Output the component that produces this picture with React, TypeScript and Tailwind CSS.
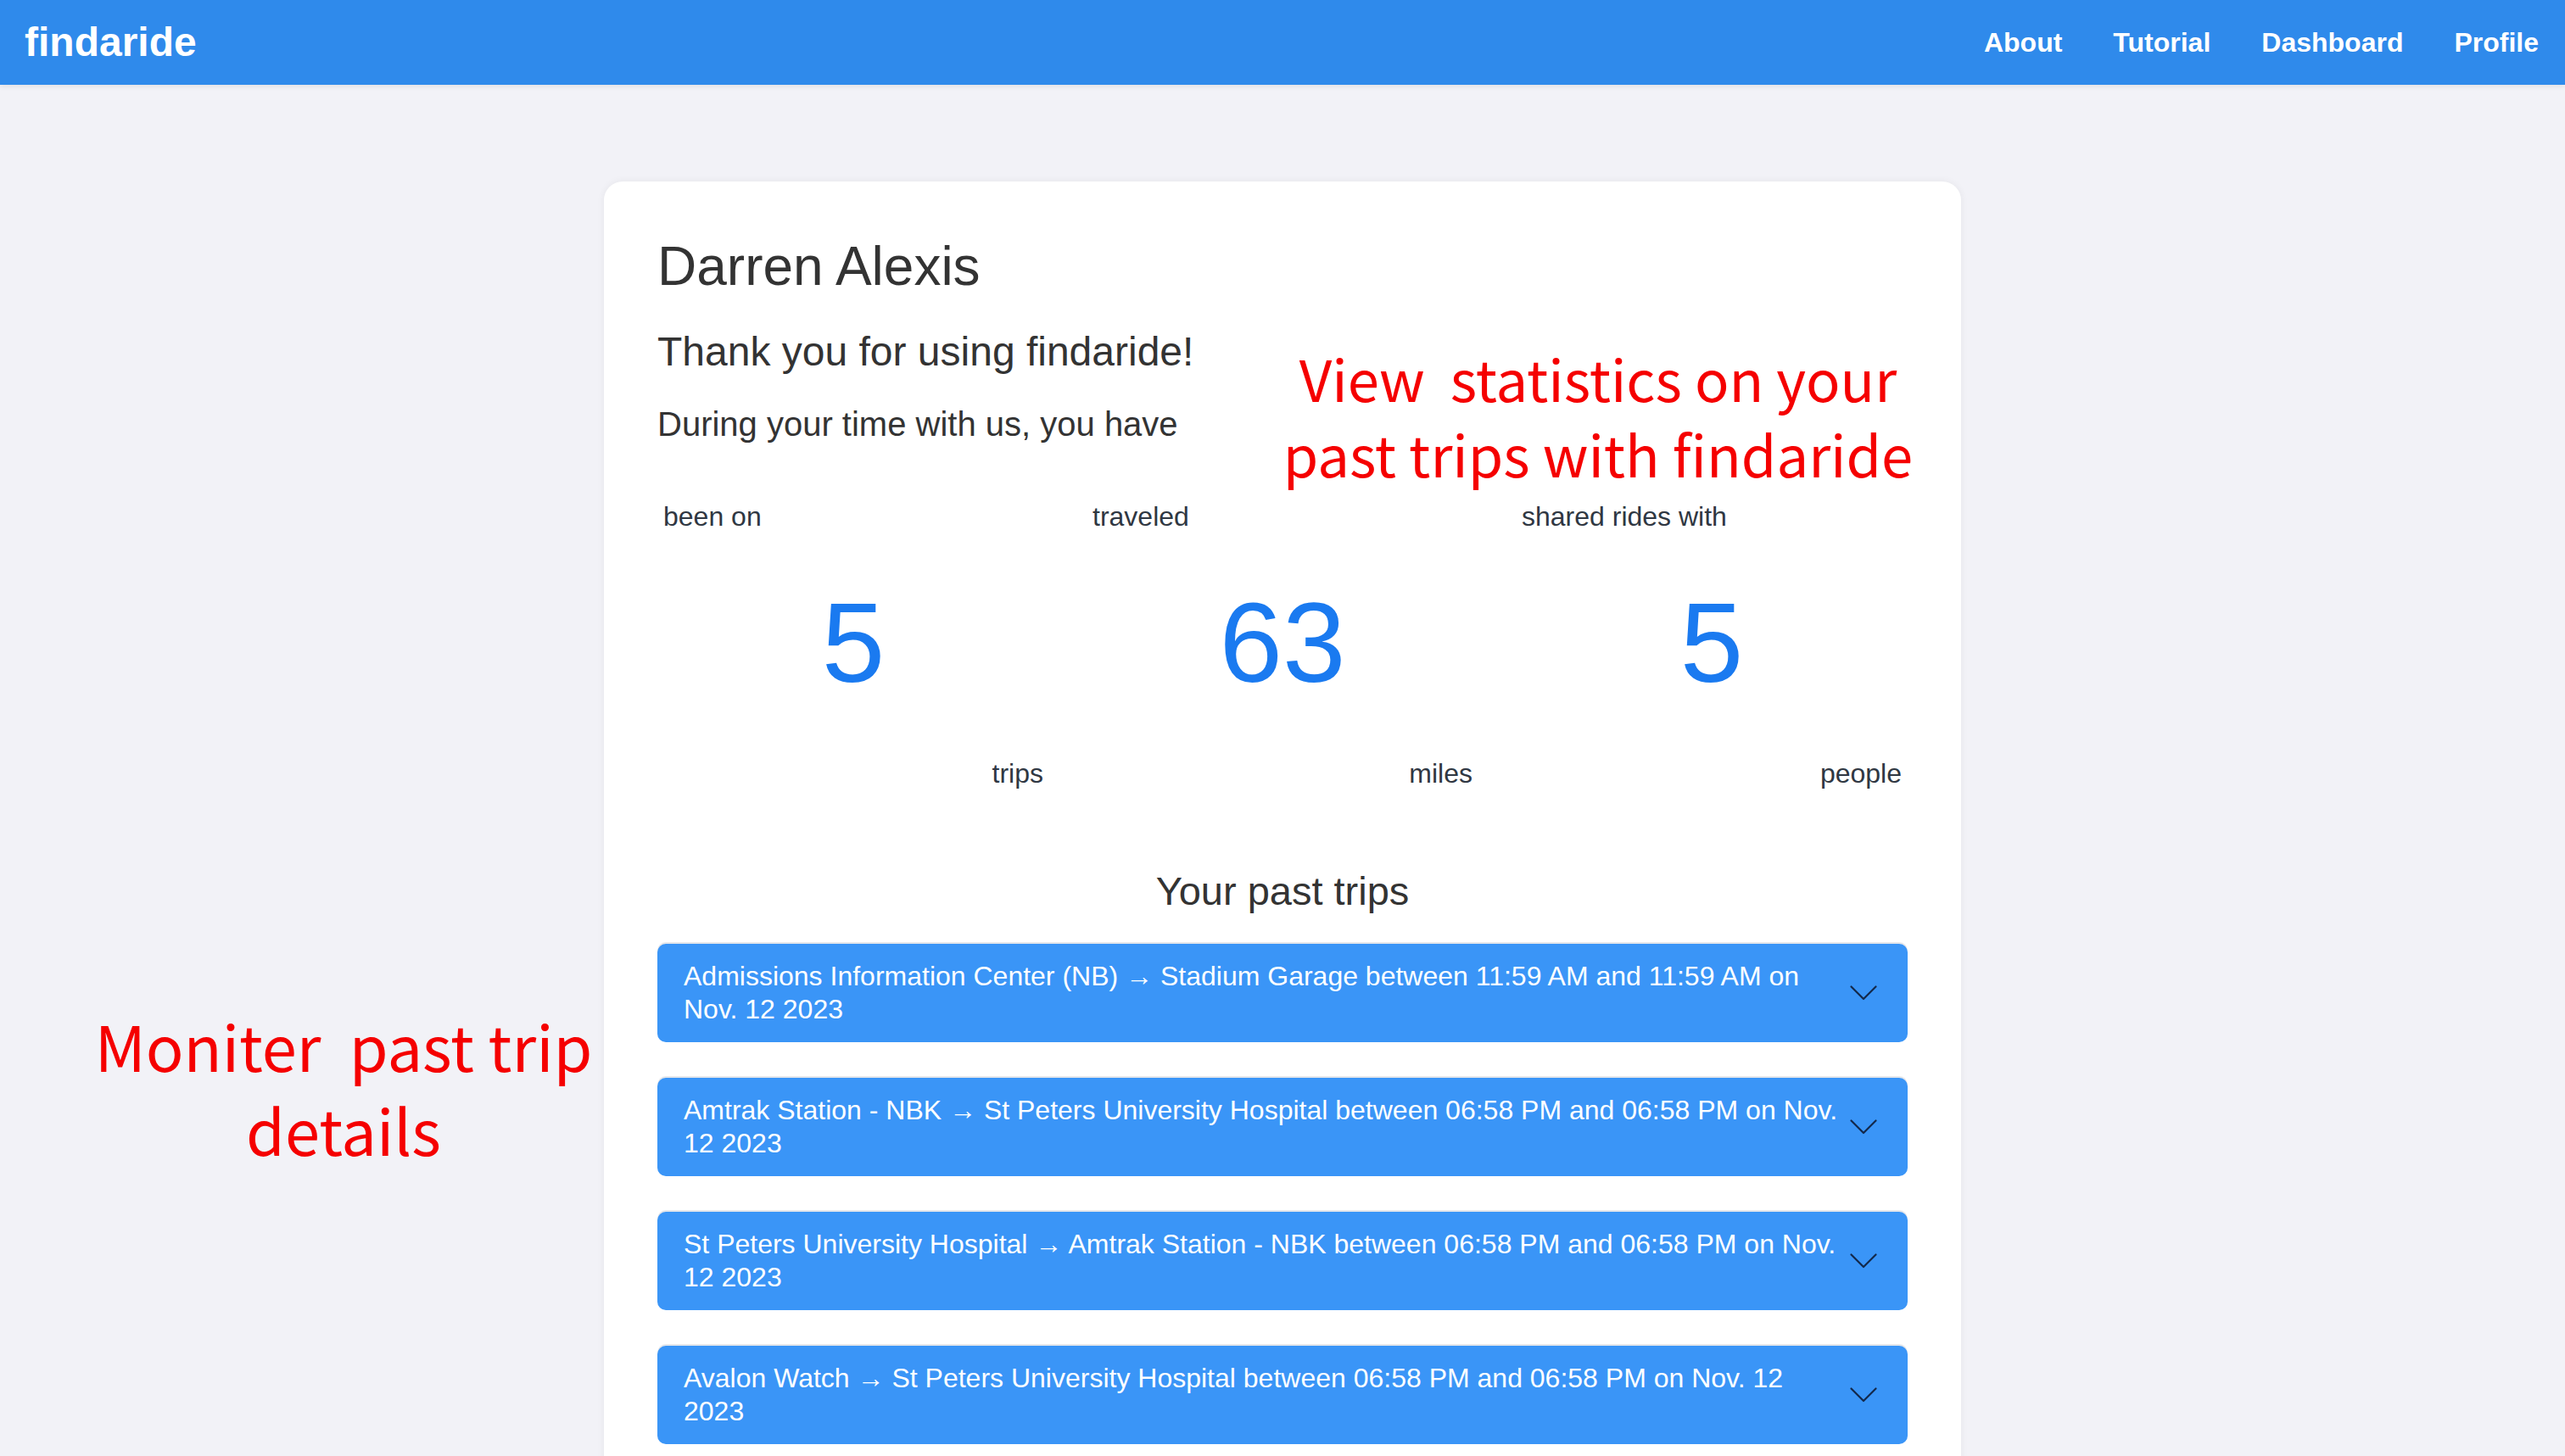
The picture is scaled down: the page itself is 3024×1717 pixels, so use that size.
import React from 'react';

const trips = [
  'Admissions Information Center (NB) → Stadium Garage between 11:59 AM and 11:59 AM on Nov. 12 2023',
  'Amtrak Station - NBK → St Peters University Hospital between 06:58 PM and 06:58 PM on Nov. 12 2023',
  'St Peters University Hospital → Amtrak Station - NBK between 06:58 PM and 06:58 PM on Nov. 12 2023',
  'Avalon Watch → St Peters University Hospital between 06:58 PM and 06:58 PM on Nov. 12 2023',
];

const stats = [
  { label: 'been on', value: '5', unit: 'trips' },
  { label: 'traveled', value: '63', unit: 'miles' },
  { label: 'shared rides with', value: '5', unit: 'people' },
];

function Chevron() {
  return (
    <svg width="32" height="18" viewBox="0 0 32 18" fill="none" className="shrink-0">
      <polyline points="1.5,1.5 16,16 30.5,1.5" stroke="#13294b" strokeWidth="2.2" strokeLinecap="round" strokeLinejoin="round" />
    </svg>
  );
}

function TripRow({ text }: { text: string }) {
  return (
    <button
      type="button"
      className="flex h-[116px] w-full items-center rounded-[10px] bg-[#3a95f7] pl-[31px] pr-[36px] text-left shadow-[0_-2px_0_#e5e7eb]"
    >
      <span className="w-[1376px] text-[32px] leading-[39px] text-white">{text}</span>
      <span className="ml-auto flex items-center">
        <Chevron />
      </span>
    </button>
  );
}

export default function App() {
  return (
    <div className="relative min-h-screen bg-[#f2f2f7] font-['Liberation_Sans',Arial,sans-serif] text-[#333]">
      <nav className="flex h-[100px] items-center justify-between bg-[#2f8aeb] pl-[29px] pr-[31px] shadow-[0_2px_6px_rgba(0,0,0,0.08)]">
        <span className="text-[48px] font-bold leading-none text-white">findaride</span>
        <div className="flex items-center gap-[60px] text-[32px] font-bold text-white">
          <a>About</a>
          <a>Tutorial</a>
          <a>Dashboard</a>
          <a>Profile</a>
        </div>
      </nav>

      <main className="mx-auto mt-[114px] w-[1600px] rounded-[22px] bg-white px-[63px] pb-[60px] pt-[64px] shadow-[0_0_10px_rgba(0,0,0,0.06)]">
        <h1 className="text-[64px] leading-[72px]">Darren Alexis</h1>
        <p className="mt-[37px] text-[48px] leading-[56px]">Thank you for using findaride!</p>
        <p className="mt-[33px] text-[40px] leading-[48px]">During your time with us, you have</p>

        <div className="mt-[65px] grid grid-cols-3 gap-[58px] px-[7px] text-[#2f3742]">
          {stats.map((s) => (
            <div key={s.label} className="flex flex-col">
              <span className="text-[32px] leading-[40px]">{s.label}</span>
              <span className="mt-[54px] text-center text-[134px] leading-[150px] text-[#1a7af0]">{s.value}</span>
              <span className="mt-[59px] text-right text-[32px] leading-[40px]">{s.unit}</span>
            </div>
          ))}
        </div>

        <h2 className="mt-[91px] text-center text-[47px] leading-[56px]">Your past trips</h2>

        <div className="mt-[34px] flex flex-col gap-[42px]">
          {trips.map((t) => (
            <TripRow key={t} text={t} />
          ))}
        </div>
      </main>

      {/* red annotations laid over the screenshot */}
      <div className="absolute left-[1480px] top-[400px] w-[808px] whitespace-pre text-center font-['Noto_Sans_CJK_SC','Noto_Sans',sans-serif] text-[67px] leading-[89px] text-[#f50000]">
        {'View  statistics on your\npast trips with findaride'}
      </div>
      <div className="absolute left-[85px] top-[1182px] w-[640px] whitespace-pre text-center font-['Noto_Sans_CJK_SC','Noto_Sans',sans-serif] text-[74px] leading-[99px] text-[#f50000]">
        {'Moniter  past trip\ndetails'}
      </div>
    </div>
  );
}
